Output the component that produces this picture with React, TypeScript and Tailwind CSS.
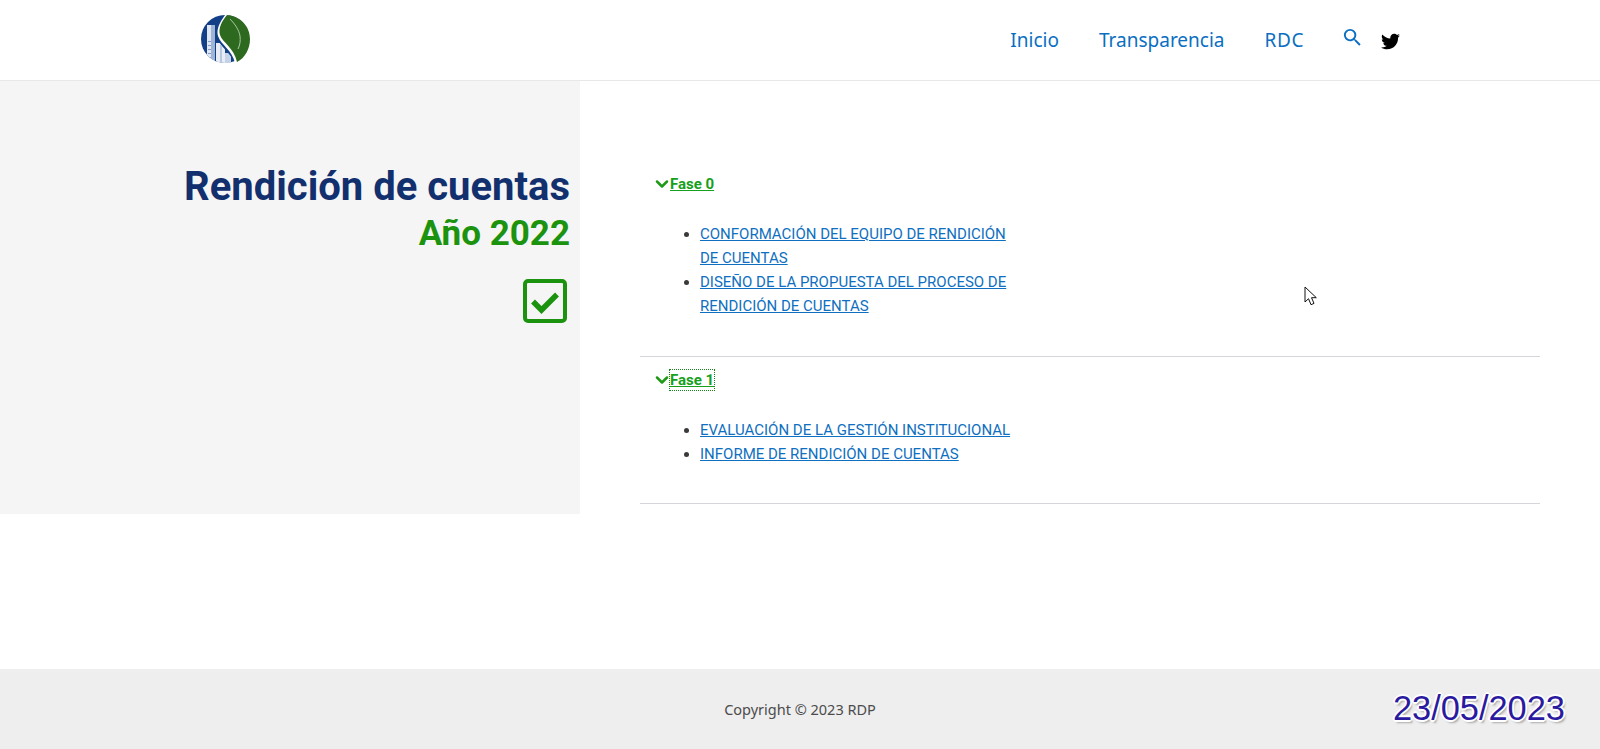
import { ChevronDown } from "lucide-react";
import { FaTwitter } from "react-icons/fa";
import { MdSearch } from "react-icons/md";

function Logo() {
  return (
    <svg width="51" height="50" viewBox="0 0 51 50" className="mt-[-1px]">
      <defs>
        <clipPath id="left">
          <path d="M23 0C10 1 1 11 1 24c0 13 11 24 24 24h9c-3-10-12-15-17-24-3-9 1-17 6-24z" />
        </clipPath>
      </defs>
      <circle cx="25" cy="24" r="24" fill="#123f85" />
      <path d="M25 0c-5 7-9 14-7 21 3 9 14 14 17 27l5-2C36 33 24 27 21 19c-1-7 3-13 8-19z" fill="#ffffff" />
      <g clipPath="url(#left)">
        <rect x="7" y="10" width="8" height="40" fill="#dfe7f2" />
        <rect x="11" y="10" width="4" height="40" fill="#9fb5d6" />
        <rect x="16" y="28" width="9" height="22" fill="#e8edf5" />
        <rect x="20" y="28" width="2" height="22" fill="#b7c7e0" />
        <rect x="25" y="38" width="6" height="12" fill="#c5d3e8" />
        <rect x="8" y="26" width="3" height="1" fill="#7f9bc6" />
        <rect x="8" y="30" width="3" height="1" fill="#7f9bc6" />
        <rect x="8" y="34" width="3" height="1" fill="#7f9bc6" />
        <rect x="8" y="38" width="3" height="1" fill="#7f9bc6" />
        <rect x="8" y="42" width="3" height="1" fill="#7f9bc6" />
      </g>
      <path d="M27 0c-5 6-9 13-7 20 3 8 14 13 17 27 8-4 13-13 13-23C50 11 40 1 27 0z" fill="#2d6a1f" />
      <path d="M30 4c5 5 9 11 10 17 .6 5 0 9-2 13" stroke="#a9c79c" strokeWidth="1" fill="none" />
    </svg>
  );
}

function Cursor() {
  return (
    <svg width="13" height="21" viewBox="0 0 13 21" className="absolute left-[1304px] top-[286px]">
      <path d="M1 1v15l3.500-3.300 2.500 6 3-1.300-2.500-5.700h4.800z" fill="#fff" stroke="#111" strokeWidth="1" />
    </svg>
  );
}

function Phase({ label, focus, items, className, listGap }: { label: string; focus?: boolean; items: string[]; className: string; listGap: string }) {
  return (
    <section className={`border-b border-[#d5d5dc] ${className}`}>
      <div className="flex items-center h-6 pl-[12px]">
        <ChevronDown size={20} strokeWidth={3} className="text-[#1f9a17] shrink-0 -mr-[2px]" />
        <a className={`text-[15px] leading-[20px] font-bold text-[#16a01c] underline ${focus ? "outline-1 outline-dotted outline-[#16801c]" : ""}`}>{label}</a>
      </div>
      <ul className={`list-disc ${listGap} pl-[60px] w-[380px] text-[15px] leading-[24px] text-[#3a3a3a]`}>
        {items.map((t) => (
          <li key={t}><a className="text-[#0f6fc0] underline">{t}</a></li>
        ))}
      </ul>
    </section>
  );
}

export default function App() {
  return (
    <div className="relative min-h-screen flex flex-col bg-white font-['Roboto',sans-serif]">
      <header className="h-[81px] border-b border-[#e8e8e8] flex items-center justify-between px-[200px]">
        <Logo />
        <nav className="flex items-center gap-10 text-[#0a6fc2] text-[19px] font-['Noto_Sans',sans-serif]">
          <a>Inicio</a>
          <a>Transparencia</a>
          <a className="tracking-[0.6px]">RDC</a>
          <MdSearch size={23} className="-mt-[5px] -mr-[23px] -ml-[3px]" />
          <FaTwitter size={19} className="text-black mt-[2px]" />
        </nav>
      </header>

      <main className="flex h-[433px]">
        <aside className="w-[580px] bg-[#f5f5f5] pr-[10px] pt-[82px] text-right">
          <h1 className="text-[40px] leading-[48px] font-bold text-[#122f6e]">Rendición de cuentas</h1>
          <h2 className="text-[35px] leading-[44px] font-bold text-[#1c930f] mt-[1px]">Año 2022</h2>
          <div className="flex justify-end pr-[3px] mt-[23px]">
            <svg width="44" height="44" viewBox="0 0 44 44" fill="none">
              <rect x="2" y="2" width="40" height="40" rx="3" stroke="#1c930f" strokeWidth="4" />
              <path d="M10 22.500l8.500 8.500 15.500-15.500" stroke="#1c930f" strokeWidth="5.500" />
            </svg>
          </div>
        </aside>
        <div className="w-[900px] ml-[60px] pt-[91px]">
          <Phase
            label="Fase 0"
            className="h-[185px]"
            listGap="mt-[26px]"
            items={["CONFORMACIÓN DEL EQUIPO DE RENDICIÓN DE CUENTAS", "DISEÑO DE LA PROPUESTA DEL PROCESO DE RENDICIÓN DE CUENTAS"]}
          />
          <Phase
            label="Fase 1"
            focus
            className="h-[147px] pt-[11px]"
            listGap="mt-[26px]"
            items={["EVALUACIÓN DE LA GESTIÓN INSTITUCIONAL", "INFORME DE RENDICIÓN DE CUENTAS"]}
          />
        </div>
      </main>

      <footer className="relative mt-auto h-[80px] bg-[#eeeeee] flex items-center justify-center">
        <p className="text-[14.500px] text-[#4b4b4b] font-['Noto_Sans',sans-serif] mt-[1px]">Copyright © 2023 RDP</p>
        <span className="absolute right-[35px] top-[19px] text-[34.400px] leading-[40px] text-[#2a1aa0] font-['Liberation_Sans',sans-serif] [text-shadow:2px_0_0_#fff,-2px_0_0_#fff,0_2px_0_#fff,0_-2px_0_#fff,1px_1px_0_#fff,-1px_-1px_0_#fff,1px_-1px_0_#fff,-1px_1px_0_#fff,2px_3px_2px_#aaa]">23/05/2023</span>
      </footer>
      <Cursor />
    </div>
  );
}
